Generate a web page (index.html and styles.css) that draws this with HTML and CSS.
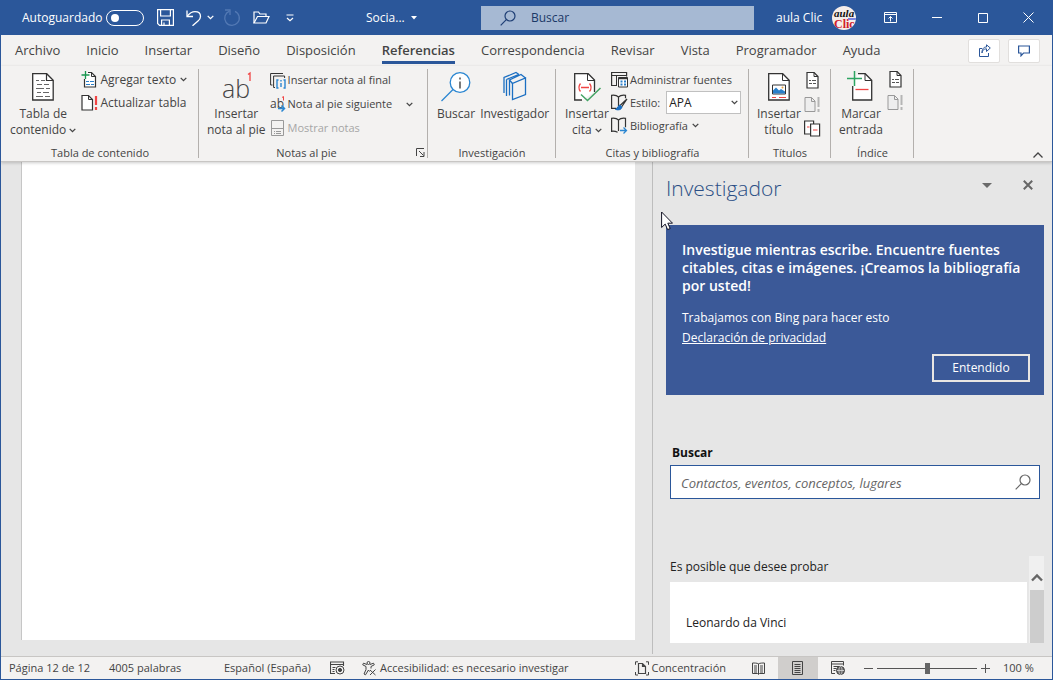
FILE: index.html
```html
<!DOCTYPE html>
<html lang="es">
<head>
<meta charset="utf-8">
<title>Word - Referencias</title>
<link rel="stylesheet" href="styles.css">
</head>
<body>
<svg class="defs" aria-hidden="true">
  <defs>
    <symbol id="chev" viewBox="0 0 7 5"><path d="M.7.9l2.8 2.8L6.3.9" fill="none" stroke="currentColor" stroke-width="1.3"/></symbol>
    <symbol id="lens" viewBox="0 0 16 16"><circle cx="10" cy="6" r="5" fill="none" stroke="currentColor" stroke-width="1.2"/><path d="M6.3 9.7L.7 15.3" stroke="currentColor" stroke-width="1.2"/></symbol>
    <symbol id="doc-list" viewBox="0 0 14 17"><path d="M1.5.5h7l4 4v11.500h-11z" fill="#fff" stroke="#333" stroke-width="1.2"/><path d="M8.500.5v4h4" fill="none" stroke="#333"/><path d="M3.500 8.500h2m1 0h4m-7 3h3m1 0h3" stroke="#555"/></symbol>
    <symbol id="doc-off" viewBox="0 0 17 17"><path d="M1 1.500h6.500l3.500 3.500v10.500h-10z" fill="#eee" stroke="#999"/><path d="M7.500 1.500v4h3.500" fill="none" stroke="#999"/><path d="M14.500 1v10m0 2v3" stroke="#b5b5b5" stroke-width="2"/></symbol>
  </defs>
</svg>
<div class="window">
  <header class="titlebar">
    <div class="quick">
      <label class="autosave">Autoguardado <input type="checkbox" class="switch"></label>
      <button class="tb save" aria-label="Guardar"><svg width="17" height="17" viewBox="0 0 17 17" fill="none" stroke="#fff" stroke-width="1.2"><path d="M.6.6h15.800v15.800H2.600l-2-2z"/><path d="M3.600.6v6.400h9.800V.6M4.600 16.400v-5.400h7.800v5.400M7 16v-2.500"/></svg></button>
      <button class="tb undo" aria-label="Deshacer"><svg width="16" height="16" viewBox="0 0 16 16" fill="none" stroke="#fff" stroke-width="1.300"><path d="M1 .5v6h6"/><path d="M1.300 6.200C3.500 3.200 6 1.700 9 1.700c3.300 0 5.500 2 5.500 4.800 0 2-1 3.200-2.500 4.500L6.500 15.800"/></svg></button>
      <button class="tb undo-more" aria-label="Más"><svg width="7" height="5"><use href="#chev"/></svg></button>
      <button class="tb redo" aria-label="Rehacer"><svg width="18" height="18" viewBox="0 0 18 18" fill="none" stroke="#5379b4" stroke-width="1.300"><path d="M2 1h5v5"/><path d="M6.500 2.200A7.300 7.300 0 1 0 12 2.400"/></svg></button>
      <button class="tb open" aria-label="Abrir"><svg width="17" height="13" viewBox="0 0 17 13" fill="none" stroke="#fff" stroke-width="1.200"><path d="M1 12V1h4.500l1.500 2h6v2.500"/><path d="M1 12l3.500-6.500h11.500L13 12z"/></svg></button>
      <button class="tb custom" aria-label="Personalizar"><svg width="8" height="8" viewBox="0 0 8 8" fill="none" stroke="#fff" stroke-width="1.200"><path d="M.5 1h7M1 4l3 2.700L7 4"/></svg></button>
      <button class="tb file">Socia... <svg width="6" height="4"><path d="M0 0h6L3 3.500z" fill="#fff"/></svg></button>
    </div>
    <label class="topsearch"><svg width="16" height="16"><use href="#lens"/></svg><input type="text" placeholder="Buscar" aria-label="Buscar"></label>
    <div class="account">
      <span class="user">aula Clic</span>
      <svg class="avatar" width="24" height="24" viewBox="0 0 24 24"><defs><clipPath id="av"><circle cx="12" cy="12" r="12"/></clipPath></defs><g clip-path="url(#av)"><rect width="24" height="24" fill="#f6eeea"/><path d="M16 13h8" stroke="#7a86e0" stroke-width="2"/><text x="2" y="11" class="av-a">aula</text><text x="2" y="22" class="av-b">Clic</text></g></svg>
      <button class="tb rib" aria-label="Opciones de cinta"><svg width="13" height="11" viewBox="0 0 13 11" fill="none" stroke="#fff"><path d="M.5.5h12v10H.5zM.5 2.500h12M6.500 9.500V4.500M4.500 6.500l2-2 2 2"/></svg></button>
      <button class="tb min" aria-label="Minimizar"><svg width="10" height="11" stroke="#fff"><path d="M0 5.500h10"/></svg></button>
      <button class="tb max" aria-label="Maximizar"><svg width="10" height="10" fill="none" stroke="#fff"><path d="M.5.5h9v9h-9z"/></svg></button>
      <button class="tb close" aria-label="Cerrar"><svg width="11" height="11" stroke="#fff"><path d="M.5.5l10 10M10.500.5l-10 10"/></svg></button>
    </div>
  </header>
  <nav class="tabs">
    <button>Archivo</button><button>Inicio</button><button>Insertar</button><button>Diseño</button><button>Disposición</button><button class="active">Referencias</button><button>Correspondencia</button><button>Revisar</button><button>Vista</button><button>Programador</button><button>Ayuda</button>
    <div class="tab-actions">
      <button aria-label="Compartir"><svg width="13" height="13" viewBox="0 0 13 13" fill="none" stroke="#2b579a"><path d="M4 4.500H1.500v8h9V9"/><path d="M4 9c.3-3 2-4.200 4.500-4.200V7.500L12.300 4 8.500.8v2.200C5 3 4 5.500 4 9z"/></svg></button>
      <button aria-label="Comentarios"><svg width="12" height="12" viewBox="0 0 12 12" fill="none" stroke="#2b579a" stroke-width="1.200"><path d="M.6 1h10.800v7H5.500L3 10.800V8H.6z"/></svg></button>
    </div>
  </nav>
  <section class="ribbon">
    <div class="group g-toc">
      <div class="body">
        <button class="big"><svg width="22" height="32" viewBox="0 0 22 32" fill="none" stroke="#333"><path d="M.7 2.700h14l6.500 6.500v19.800H.7z" fill="#fff" stroke-width="1.300"/><path d="M14.500 2.700v6.800h6.700" stroke-width="1.200"/><path d="M4 9.500h3m2 0h4M5 13.500h5m2 0h5M4 17.500h8m2 0h4M5 21.500h4m2 0h6M4 25.500h7m2 0h5" stroke="#666"/></svg><span>Tabla de<br>contenido <svg width="7" height="5"><use href="#chev"/></svg></span></button>
        <div class="stack r23">
          <button class="small"><svg width="17" height="17" viewBox="0 0 17 17" fill="none" stroke="#333"><path d="M7 1.500h3.500l4 4v10.500h-11V8" fill="#fff" stroke-width="1.200"/><path d="M10.500 1.500v4h4" /><path d="M5 10.500h3m1 0h4M5 13.500h4m1 0h3" stroke="#2a7fc9"/><path d="M4.500 0v8M.5 4h8" stroke="#1a9850" stroke-width="1.300"/></svg>Agregar texto <svg width="7" height="5"><use href="#chev"/></svg></button>
          <button class="small"><svg width="17" height="17" viewBox="0 0 17 17" fill="none" stroke="#333"><path d="M1 1.500h6.500l4 4v10.500H1z" fill="#fff" stroke-width="1.200"/><path d="M7.500 1.500v4h4"/><path d="M15 2v9m0 2v3" stroke="#f04444" stroke-width="2.200"/></svg>Actualizar tabla</button>
        </div>
      </div>
      <h2>Tabla de contenido</h2>
    </div>
    <div class="group g-notes">
      <div class="body">
        <button class="big"><svg class="ab-icon" width="32" height="36" viewBox="0 0 32 36"><text x="2" y="27" class="ab">ab</text><path d="M28 3.500l2-1.500v8" fill="none" stroke="#f04444" stroke-width="1.300"/></svg><span>Insertar<br>nota al pie</span></button>
        <div class="stack r24">
          <button class="small"><svg width="16" height="17" viewBox="0 0 16 17" fill="none" stroke="#333"><path d="M2.500 13H.6V1.500h12.400"/><path d="M5 15.500H3.600V4h11V6"/><path d="M8.500 8H7v8h1.500M13.500 8H15v8h-1.500M11 8v1.500m0 1.500v4" stroke="#2a86d1" stroke-width="1.400"/></svg>Insertar nota al final</button>
          <button class="small"><svg width="16" height="17" viewBox="0 0 16 17" fill="none"><text x="0" y="12" class="ab-s">ab</text><path d="M12 1.500l1.500-1v4" stroke="#f04444"/><path d="M8 12.500h6M11.500 9.500l3 3-3 3" stroke="#2a86d1" stroke-width="1.500"/></svg>Nota al pie siguiente <svg class="far" width="7" height="5"><use href="#chev"/></svg></button>
          <button class="small" disabled><svg width="16" height="17" viewBox="0 0 16 17" fill="none" stroke="#999"><path d="M1.500.5h12v15h-12zM1.500 8.500h12M4 11.500h1m1 0h5m-7 2h1m1 0h5"/></svg>Mostrar notas</button>
        </div>
      </div>
      <h2>Notas al pie</h2>
      <button class="launch" aria-label="Opciones de notas"><svg width="9" height="9" viewBox="0 0 9 9" fill="none" stroke="#444"><path d="M.5 8V.5H8M3 3l4.500 4.500M8 4v4.500H4"/></svg></button>
    </div>
    <div class="group g-inv">
      <div class="body">
        <button class="big"><svg width="32" height="32" viewBox="0 0 32 32" fill="none" stroke="#2a86d1" stroke-width="1.300"><circle cx="20" cy="11.500" r="9.800" fill="#fff"/><path d="M13 18.500L1.500 30"/><path d="M20 6.500v2m0 2v7" stroke="#333"/></svg><span>Buscar</span></button>
        <button class="big"><svg width="24" height="32" viewBox="0 0 24 32" fill="none" stroke="#1b6fc2" stroke-width="1.300"><path d="M9.500 28.500V12.500L22.500 7v16.500z"/><path d="M9.500 12.500L6.500 9 18 3.500l4.500 3.500M6.500 9v15.500M3.500 25V8.500M1 22V6.500L13 1.500l3 2M3.500 8.500L15.500 3.500"/></svg><span>Investigador</span></button>
      </div>
      <h2>Investigación</h2>
    </div>
    <div class="group g-cit">
      <div class="body">
        <button class="big"><svg width="30" height="32" viewBox="0 0 30 32" fill="none" stroke="#333"><path d="M10 29H2.700V2.700h13.500L22.500 9v12" fill="#fff" stroke-width="1.300"/><path d="M15.500 2.700v6.800h7"/><path d="M8.500 12.500c-2 2.500-2 5.500 0 8M17.500 12.500c2 2.500 2 5.500 0 8M9 16.500h8" stroke="#f04444" stroke-width="1.300"/><path d="M9 23.500l6.500 6L28.500 17" stroke="#43a364" stroke-width="1.500"/></svg><span>Insertar<br>cita <svg width="7" height="5"><use href="#chev"/></svg></span></button>
        <div class="stack r23">
          <button class="small"><svg width="17" height="17" viewBox="0 0 17 17" fill="none" stroke="#333"><path d="M6 14.500H.6V1.500h15v4" stroke-width="1.200"/><path d="M.6 4.500h15M5.500 4.500v10"/><path d="M7.500 6.500h9v9.500h-9z" fill="#fff"/><path d="M7.500 7.500h9" stroke-width="1.500"/><path d="M9.500 10.500h2m1.500 0h2m-5.500 3h2m1.500 0h2" stroke="#2a7fc9" stroke-width="2"/></svg>Administrar fuentes</button>
          <div class="small"><svg width="17" height="17" viewBox="0 0 17 17" fill="none" stroke="#333"><path d="M7.500 3C5.500 1 3 1 .6 1.300v13h5M7.500 3v9M7.500 3C9.500 1 12 1 14.500 1.300v3" stroke-width="1.200"/><path d="M16 5l-7 6.500 1.500 1.500z" stroke-width="1.200"/><path d="M9 11c-2 .5-2 3-4.500 4.500 3.500 1 6 0 6.500-2.500z" fill="#1b6fc2" stroke="#1b6fc2"/></svg><label for="style">Estilo:</label>
            <span class="pick"><select id="style"><option>APA</option></select><svg width="7" height="5"><use href="#chev"/></svg></span></div>
          <button class="small"><svg width="17" height="17" viewBox="0 0 17 17" fill="none" stroke="#333"><path d="M7.500 3C5.500 1 3 1 .6 1.300v13c2.500-.3 4 0 6 1M7.500 3v11M7.500 3C9.500 1 12 1 14.500 1.300v9" stroke-width="1.200"/><path d="M9 13.500h6.500M12.500 10.500l3 3-3 3" stroke="#2a86d1" stroke-width="1.300"/></svg>Bibliografía <svg width="7" height="5"><use href="#chev"/></svg></button>
        </div>
      </div>
      <h2>Citas y bibliografía</h2>
    </div>
    <div class="group g-tit">
      <div class="body">
        <button class="big"><svg width="22" height="32" viewBox="0 0 22 32" fill="none" stroke="#333"><path d="M.7 2.700h14l6.500 6.500v19.800H.7z" fill="#fff" stroke-width="1.300"/><path d="M14.500 2.700v6.800h6.700"/><path d="M4.500 14h13v9h-13z" fill="#fff"/><path d="M5 22.500v-3l3-3 3 3 2-1.500 4 2.500v2z" fill="#2a7fc9" stroke="none"/><circle cx="14.500" cy="16.500" r="1" fill="#e8a33d" stroke="none"/><path d="M4 26.500h4m3 0h7" stroke="#f04444" stroke-width="1.200"/></svg><span>Insertar<br>título</span></button>
        <div class="stack r24">
          <button class="small" aria-label="Tabla de ilustraciones"><svg width="17" height="17"><use href="#doc-list"/></svg></button>
          <button class="small" disabled aria-label="Actualizar tabla"><svg width="17" height="17"><use href="#doc-off"/></svg></button>
          <button class="small" aria-label="Referencia cruzada"><svg width="17" height="17" viewBox="0 0 17 17" fill="#fff" stroke="#333" stroke-width="1.200"><path d="M.6 1h9v13h-9z"/><path d="M6.600 4h9v12h-9z"/><path d="M3 7h2.500M9 10h4.500" stroke="#f04444"/></svg></button>
        </div>
      </div>
      <h2>Títulos</h2>
    </div>
    <div class="group g-ind">
      <div class="body">
        <button class="big"><svg width="28" height="32" viewBox="0 0 28 32" fill="none" stroke="#333"><path d="M5.700 15v14h19V9.200l-6.500-6.500H11" fill="#fff" stroke-width="1.300"/><path d="M18 2.700v6.800h6.700"/><path d="M8.500 18.500h13" stroke="#f04444" stroke-width="1.300"/><path d="M7.500 0v15M0 7.500h15" stroke="#2da562" stroke-width="1.500"/></svg><span>Marcar<br>entrada</span></button>
        <div class="stack r23">
          <button class="small" aria-label="Insertar índice"><svg width="17" height="17"><use href="#doc-list"/></svg></button>
          <button class="small" disabled aria-label="Actualizar índice"><svg width="17" height="17"><use href="#doc-off"/></svg></button>
        </div>
      </div>
      <h2>Índice</h2>
    </div>
    <button class="collapse" aria-label="Contraer cinta"><svg width="10" height="6" fill="none" stroke="#444" stroke-width="1.300"><path d="M.5 5.500L5 1l4.500 4.500"/></svg></button>
  </section>
  <main class="work">
    <div class="canvas"><article class="page"></article></div>
    <aside class="pane">
      <svg class="cursor" width="12" height="20" viewBox="0 0 12 20"><path d="M.6 1v15.500l3.600-3.400 2.400 5.500 2.600-1.100-2.400-5.300h4.700z" fill="#fff" stroke="#112" stroke-width="1"/></svg>
      <div class="pane-head"><h1>Investigador</h1>
        <button aria-label="Opciones del panel"><svg width="10" height="5"><path d="M0 0h10L5 5z" fill="#6a6a6a"/></svg></button>
        <button aria-label="Cerrar panel"><svg width="10" height="10" stroke="#666" stroke-width="2"><path d="M.8.8l8.400 8.400M9.200.8L.8 9.200"/></svg></button>
      </div>
      <section class="card">
        <h3>Investigue mientras escribe. Encuentre fuentes citables, citas e imágenes. ¡Creamos la bibliografía por usted!</h3>
        <p>Trabajamos con Bing para hacer esto</p>
        <p><a href="#">Declaración de privacidad</a></p>
        <button>Entendido</button>
      </section>
      <label class="find-label" for="find">Buscar</label>
      <div class="find"><input id="find" type="text" placeholder="Contactos, eventos, conceptos, lugares"><svg width="16" height="16"><use href="#lens"/></svg></div>
      <div class="results">
        <div class="list"><p>Es posible que desee probar</p><div class="item">Leonardo da Vinci</div></div>
        <div class="scroll"><svg width="12" height="9" fill="none" stroke="#666" stroke-width="2.400"><path d="M1 7.500l5-5 5 5"/></svg><i></i></div>
      </div>
    </aside>
  </main>
  <footer class="status">
    <span class="s-page">Página 12 de 12</span>
    <span class="s-words">4005 palabras</span>
    <span class="s-lang">Español (España)</span>
    <svg class="s-mac" width="15" height="14" viewBox="0 0 15 14" fill="none" stroke="#444"><path d="M5 12.500H.5V1h13v4M.5 3.500h13M2.500 6.500h3m-3 2h2m-2 2h2" stroke-width="1.100"/><circle cx="10" cy="9" r="4" /><circle cx="10" cy="9" r="1.600" fill="#444"/></svg>
    <span class="s-acc"><svg width="15" height="15" viewBox="0 0 15 15" fill="none" stroke="#444"><circle cx="6.500" cy="2" r="1.500"/><path d="M5 3.500L1.500 2.200.7 3.800 4 5.500v3L2 13l1.500.8L6.500 9l1 1.500M8 3.500l3.500-1.300.8 1.600L9 5.500v2M8 9l5.500 5M13.500 8.500L8 14"/></svg>Accesibilidad: es necesario investigar</span>
    <button class="s-focus"><svg width="14" height="15" viewBox="0 0 14 15" fill="none" stroke="#444"><path d="M3 .8H.5v3M.5 11v3H3M11 .8h2.500v3M13.500 11v3H11"/><path d="M3.500 2.500h4l3 3v7h-7zM7.500 2.500v3h3" stroke-width="1.200"/></svg>Concentración</button>
    <button class="view" aria-label="Modo de lectura"><svg width="13" height="13" viewBox="0 0 13 13" fill="none" stroke="#444"><path d="M.5 1c2 0 4.500 0 6 .8C8 1 10.500 1 12.500 1v10.500h-5l-1 1-1-1h-5zM6.500 2v10M2 4h3m-3 2h3m-3 2h3m-3 2h3m3-6h3m-3 2h3m-3 2h3m-3 2h3"/></svg></button>
    <button class="view on" aria-label="Diseño de impresión"><svg width="12" height="14" viewBox="0 0 12 14" fill="none" stroke="#444"><path d="M.5.5h10v13H.5zM2.500 3.500h6m-6 2h6m-6 2h6m-6 2h6m-6 2h6"/></svg></button>
    <button class="view" aria-label="Diseño web"><svg width="14" height="14" viewBox="0 0 14 14" fill="none" stroke="#444"><path d="M4 12.500H.5V.5h12v4M.5 3h12M2.500 5.500h6m-6 2h3m-3 2h2"/><circle cx="9.500" cy="9.500" r="4" fill="#666"/><ellipse cx="9.500" cy="9.500" rx="1.600" ry="4" stroke="#ddd" stroke-width=".7"/><path d="M6 9.500h7" stroke="#ddd" stroke-width=".8"/></svg></button>
    <button class="zoom-b" aria-label="Alejar"><svg width="9" height="9" stroke="#555"><path d="M0 4.500h9"/></svg></button>
    <input class="zoom" type="range" min="0" max="100" value="50" aria-label="Zoom">
    <button class="zoom-b" aria-label="Acercar"><svg width="9" height="9" stroke="#555"><path d="M0 4.500h9M4.500 0v9"/></svg></button>
    <span class="s-pct">100 %</span>
  </footer>
</div>
</body>
</html>
```

FILE: styles.css
```css
* { box-sizing: border-box; }
body { margin: 0; font: 12px/16px "Segoe UI", "Open Sans", "Noto Sans", sans-serif; color: #444; }
button, input, select { font: inherit; color: inherit; }
button { background: none; border: 0; padding: 0; white-space: nowrap; }
h1, h2, h3, p { margin: 0; font-weight: 400; }
svg { flex: none; }
.defs { position: absolute; width: 0; height: 0; }
.window { height: 100vh; display: flex; flex-direction: column; border: 1px solid #2b579a; border-top: 0; background: #e6e6e6; overflow: hidden; }

.titlebar { flex: none; height: 35px; display: flex; align-items: center; background: #2b579a; color: #fff; }
.quick { width: 480px; flex: none; display: flex; align-items: center; padding-left: 21px; }
.autosave { display: flex; align-items: center; justify-content: space-between; width: 122px; }
.switch { appearance: none; margin: 0; width: 38px; height: 16px; border: 1px solid #fff; border-radius: 8px; display: flex; align-items: center; padding-left: 4px; }
.switch::before { content: ""; width: 8px; height: 8px; border-radius: 50%; background: #fff; }
.tb { display: flex; align-items: center; }
.save { margin-left: 13px; }
.undo { margin-left: 12px; }
.undo-more { margin-left: 5px; }
.redo { margin-left: 9px; }
.open { margin-left: 12px; }
.custom { margin-left: 16px; }
.file { margin-left: 72px; gap: 6px; }
.topsearch { flex: 1; height: 24px; background: #a6b9d3; display: flex; align-items: center; gap: 15px; padding-left: 19px; color: #1f3f75; }
.topsearch input { flex: 1; min-width: 0; border: 0; background: none; padding: 0; outline: 0; }
.topsearch input::placeholder { color: #1b3866; opacity: 1; }
.account { width: 298px; flex: none; display: flex; align-items: center; padding-left: 22px; }
.user { width: 56px; white-space: nowrap; }
.av-a { font: italic bold 11px "Liberation Serif", serif; fill: #111; }
.av-b { font: bold 12px "Liberation Serif", serif; fill: #d0202c; }
.rib { margin-left: 28px; }
.min { margin-left: 35px; }
.max { margin-left: 36px; }
.close { margin-left: 35px; }

.tabs { flex: none; height: 31px; display: flex; align-items: center; gap: 26px; padding: 0 12px 0 14px; background: #f3f2f1; font-size: 13px; }
.tabs > button { height: 27px; line-height: 24px; padding-top: 1px; border-bottom: 3px solid transparent; }
.tabs > .active { font-weight: 600; border-color: #2b579a; }
.tab-actions { margin-left: auto; display: flex; gap: 8px; }
.tab-actions button { width: 32px; height: 24px; display: grid; place-items: center; background: #fff; border: 1px solid #e1dfdd; border-radius: 2px; }

.ribbon { flex: none; height: 96px; display: flex; background: #f3f2f1; border-bottom: 1px solid #c8c6c4; position: relative; z-index: 1; box-shadow: 0 1px 3px #0003; }
.group { flex: none; display: flex; flex-direction: column; position: relative; }
.group::after { content: ""; position: absolute; right: 0; top: 3px; bottom: 3px; width: 1px; background: #b3b0ad; }
.body { height: 79px; display: flex; align-items: flex-start; }
.group h2 { text-align: center; font-size: 11px; line-height: 16px; }
.g-toc { width: 198px; }
.g-toc .body { padding-left: 9px; gap: 5px; }
.g-notes { width: 229px; }
.g-notes .body { padding-left: 8px; gap: 4px; }
.g-notes h2 { padding-right: 14px; }
.g-inv { width: 128px; }
.g-inv .body { padding-left: 9px; gap: 5px; }
.g-cit { width: 193px; }
.g-cit .body { padding-left: 9px; gap: 2px; }
.g-tit { width: 82px; }
.g-tit .body { padding-left: 8px; gap: 3px; }
.g-ind { width: 83px; }
.g-ind .body { padding-left: 8px; gap: 4px; }
.big { display: flex; flex-direction: column; align-items: center; gap: 3px; padding-top: 5px; }
.big span svg { vertical-align: 1px; }
.ab-icon { margin-bottom: -4px; }
.ab { font: 300 25px "Open Sans", "Noto Sans", sans-serif; fill: #444; }
.ab-s { font: 12px "Open Sans", "Noto Sans", sans-serif; fill: #444; }
.stack { display: flex; flex-direction: column; padding-top: 2px; align-items: flex-start; }
.small { display: flex; align-items: center; gap: 2px; height: 24px; font-size: 11px; white-space: nowrap; }
.g-toc .small { font-size: 12px; }
.r23 .small { height: 23px; }
.small:disabled { color: #a6a6a6; }
.small svg:last-child:not(:first-child) { margin-left: 2px; }
.small svg.far:last-child:not(:first-child) { margin-left: 12px; }
.pick { display: flex; align-items: center; position: relative; margin-left: 4px; font-size: 12px; }
.pick select { appearance: none; width: 75px; height: 23px; border: 1px solid #c0c0c0; border-radius: 0; background: #fff; color: #222; padding: 0 2px; }
.pick svg { position: absolute; right: 3px; }
.launch { position: absolute; right: 3px; bottom: 4px; line-height: 0; }
.collapse { margin: auto 9px 3px auto; line-height: 0; }

.work { flex: 1; min-height: 0; display: flex; }
.canvas { flex: 1; padding: 0 17px 16px 20px; display: flex; }
.page { flex: 1; background: #fff; border-left: 1px solid #c6c6c6; }
.pane { width: 400px; flex: none; display: flex; flex-direction: column; position: relative; margin-bottom: 2px; border-left: 1px solid #bdbdbd; padding: 0 8px 11px 13px; color: #222; }
.cursor { position: absolute; left: 8px; top: 49px; }
.pane-head { display: flex; height: 63px; padding: 14px 11px 0 0; align-items: flex-start; gap: 31px; }
.pane-head h1 { flex: 1; font-size: 21px; font-weight: 300; line-height: 24px; color: #2b4f85; }
.pane-head button { height: 18px; width: 10px; display: grid; place-items: center; }
.card { background: #3b5998; color: #fff; height: 170px; padding: 16px 14px 13px 16px; display: flex; flex-direction: column; }
.card h3 { font-size: 14px; line-height: 18px; font-weight: 600; margin-bottom: 13px; }
.card p { line-height: 20px; }
.card a { color: #fff; }
.card button { margin-top: auto; align-self: flex-end; width: 98px; height: 28px; border: 2px solid #e8e6e3; }
.find-label { margin: 50px 0 4px 6px; font-weight: 700; color: #111; }
.find { flex: none; height: 34px; margin: 0 4px; border: 1px solid #2b579a; background: #fff; display: flex; align-items: center; padding: 0 8px 0 10px; color: #666; font-size: 13px; }
.find input { flex: 1; border: 0; padding: 2px 0 0; outline: 0; min-width: 0; }
.find input::placeholder { font-style: italic; color: #666; opacity: 1; }
.results { flex: 1; min-height: 0; margin-top: 57px; padding-left: 4px; display: flex; gap: 2px; }
.list { flex: 1; display: flex; flex-direction: column; }
.list p { line-height: 22px; margin-bottom: 4px; }
.item { flex: 1; background: #fff; padding: 30px 16px 0; line-height: 22px; }
.scroll { width: 15px; background: #f0f0f0; display: flex; flex-direction: column; align-items: center; padding-top: 17px; gap: 8px; }
.scroll i { flex: 1; align-self: stretch; margin-left: 1px; background: #cdcdcd; }

.status { flex: none; height: 23px; border-top: 1px solid #c8c6c4; background: #f3f2f1; display: flex; align-items: center; padding-left: 8px; font-size: 11px; white-space: nowrap; }
.s-page { width: 100px; }
.s-words { width: 115px; }
.s-lang { width: 106px; }
.s-mac { margin-right: 17px; }
.s-acc, .s-focus { display: flex; align-items: center; gap: 3px; }
.s-focus { margin-left: auto; margin-right: 12px; }
.view { width: 40px; height: 22px; display: grid; place-items: center; }
.view.on { background: #d0cecc; }
.zoom-b { width: 9px; margin: 0 4px; line-height: 0; }
.view + .zoom-b { margin-left: 6px; }
.zoom { appearance: none; width: 100px; height: 12px; margin: 0; background: linear-gradient(#555, #555) center / 100% 1px no-repeat; }
.zoom::-webkit-slider-thumb { appearance: none; width: 5px; height: 11px; background: #666; }
.s-pct { width: 49px; margin-left: 9px; }
```
